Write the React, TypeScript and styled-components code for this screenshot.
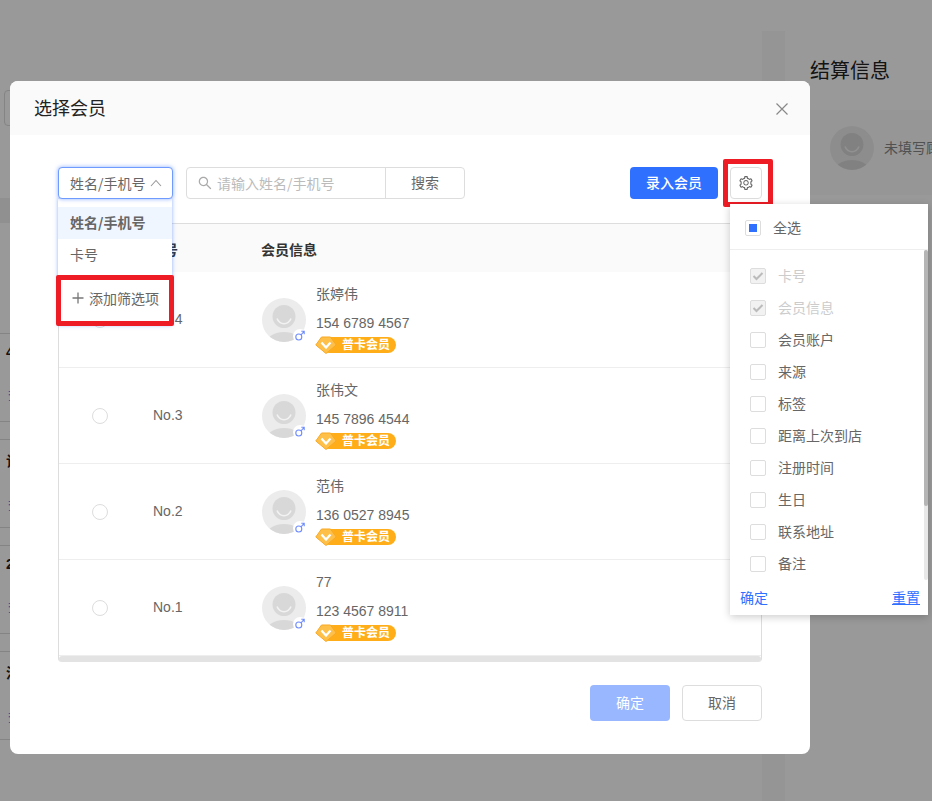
import React from "react";
import styled, { createGlobalStyle } from "styled-components";
import { AiOutlineSetting, AiOutlineSearch } from "react-icons/ai";

const FONT = `"Liberation Sans", "Noto Sans CJK SC", sans-serif`;
const CJK = `"Noto Sans CJK SC", sans-serif`;
const BLUE = "#3070ff";

const Global = createGlobalStyle`
  html, body { margin: 0; padding: 0; background: #fff; }
  body { font-family: ${FONT}; font-size: 14px; color: #666; overflow: hidden; }
  * { box-sizing: border-box; }
`;

const Page = styled.div`
  position: relative;
  width: 932px;
  height: 801px;
  overflow: hidden;
  background: #fff;
`;
const TopBand = styled.div`
  height: 31px;
  background: #fff;
`;
const Workspace = styled.div`
  display: flex;
  height: 770px;
  background: #f8f8f8;
`;
const LeftArea = styled.div`
  width: 762px;
  background: #fff;
  padding-top: 59px;
`;
const BgFilter = styled.div`
  width: 120px;
  height: 36px;
  margin-left: 4px;
  border: 1px solid #ddd;
  border-radius: 4px;
`;
const BgTableHead = styled.div`
  height: 25px;
  margin-top: 72px;
  background: #f0f0f0;
`;
const BgRows = styled.div`
  margin-top: 110px;
  display: flex;
  flex-direction: column;
  gap: 17px;
`;
const BgRow = styled.div`
  height: 89px;
  padding: 10px 0 0 6px;
  border-top: 1px solid #ddd;
  border-bottom: 1px solid #ddd;
`;
const BgRowTitle = styled.div`
  font-size: 14px;
  font-weight: 700;
  color: #222;
`;
const BgRowLink = styled.div`
  margin-top: 26px;
  padding-left: 2px;
  font-size: 12px;
  color: ${BLUE};
`;
const RightPanel = styled.aside`
  width: 147px;
  margin-left: 23px;
  background: #fff;
`;
const SettleTitle = styled.h2`
  margin: 0;
  padding: 27px 0 0 25px;
  height: 79px;
  font-size: 20px;
  line-height: 26px;
  font-weight: 400;
  color: #222;
`;
const CustomerCard = styled.div`
  display: flex;
  align-items: center;
  gap: 9px;
  height: 85px;
  padding: 0 0 9px 45px;
  background: #fbfbfb;
  white-space: nowrap;
  overflow: hidden;
  font-size: 14px;
  color: #888;
`;
const CustomerName = styled.span`
  margin: -2px 0 0 1px;
`;
const Overlay = styled.div`
  position: absolute;
  inset: 0;
  background: rgba(0, 0, 0, 0.4);
`;

const Modal = styled.div`
  position: absolute;
  left: 10px;
  top: 81px;
  width: 800px;
  height: 673px;
  background: #fff;
  border-radius: 8px;
  display: flex;
  flex-direction: column;
`;
const ModalHeader = styled.header`
  display: flex;
  align-items: center;
  justify-content: space-between;
  height: 54px;
  padding: 0 22px 0 24px;
  background: #fafafa;
  border-radius: 8px 8px 0 0;
`;
const ModalTitle = styled.h1`
  margin: 0 0 2px;
  font-size: 18px;
  font-weight: 400;
  color: #222;
`;
const CloseIcon = styled.svg`
  width: 12px;
  height: 12px;
  display: block;
  margin-top: 2px;
`;
const ModalBody = styled.div`
  padding: 32px 48px 0;
`;
const Toolbar = styled.div`
  display: flex;
  align-items: center;
  height: 32px;
`;
const SelectWrap = styled.div`
  position: relative;
  width: 115px;
  height: 32px;
`;
const SelectBox = styled.div`
  display: flex;
  align-items: center;
  justify-content: space-between;
  height: 32px;
  padding: 0 10px 0 11px;
  border: 1px solid #6f9bff;
  border-radius: 4px;
  background: #fff;
  box-shadow: 0 0 4px rgba(48, 112, 255, 0.55);
  color: #666;
  font-family: ${CJK};
  white-space: nowrap;
  position: relative;
  z-index: 2;
`;
const Chevron = styled.svg`
  width: 12px;
  height: 8px;
  display: block;
`;
const Dropdown = styled.div`
  position: absolute;
  left: 0;
  top: 32px;
  width: 114px;
  padding: 8px 0 12px;
  background: #fff;
  box-shadow: 0 0 4px rgba(48, 112, 255, 0.55);
  z-index: 1;
`;
const DropItem = styled.div<{ $active?: boolean }>`
  height: 32px;
  line-height: 30px;
  padding-left: 12px;
  font-family: ${CJK};
  font-weight: ${(p) => (p.$active ? 700 : 400)};
  background: ${(p) => (p.$active ? "#f0f6ff" : "#fff")};
  color: #666;
`;
const DropAdd = styled.div`
  display: flex;
  align-items: center;
  gap: 5px;
  height: 30px;
  margin-top: 12px;
  padding-left: 14px;
  white-space: nowrap;
  color: #666;
`;
const PlusIcon = styled.svg`
  width: 12px;
  height: 12px;
  display: block;
  flex: none;
`;
const DropMark = styled.div`
  position: absolute;
  left: -2px;
  top: 76px;
  width: 118px;
  height: 51px;
  border: 5px solid #ee1c25;
  border-radius: 2px;
  pointer-events: none;
`;
const SearchGroup = styled.div`
  display: flex;
  margin-left: 13px;
  height: 32px;
  width: 279px;
  border: 1px solid #ddd;
  border-radius: 4px;
`;
const SearchField = styled.div`
  display: flex;
  align-items: center;
  gap: 4px;
  width: 199px;
  padding-left: 10px;
  color: #bbb;
  font-family: ${CJK};
  font-size: 14px;
  border-right: 1px solid #ddd;
  white-space: nowrap;
`;
const SearchButton = styled.div`
  flex: 1;
  text-align: center;
  line-height: 30px;
  color: #666;
`;
const Spacer = styled.div`
  flex: 1;
`;
const PrimaryButton = styled.div`
  width: 88px;
  height: 32px;
  line-height: 32px;
  text-align: center;
  background: ${BLUE};
  border-radius: 4px;
  color: #fff;
  font-weight: 500;
`;
const GearButton = styled.div`
  position: relative;
  display: flex;
  align-items: center;
  justify-content: center;
  width: 32px;
  height: 32px;
  margin-left: 12px;
  border: 1px solid #ddd;
  border-radius: 4px;
  background: #fff;
  color: #666;
  font-size: 16px;
`;
const GearMark = styled.div`
  position: absolute;
  left: -8px;
  top: -9px;
  width: 50px;
  height: 48px;
  border: 5px solid #ee1c25;
  border-radius: 2px;
  pointer-events: none;
`;

const Table = styled.div`
  margin-top: 24px;
  border: 1px solid #ddd;
  border-bottom: 0;
  border-radius: 0 0 4px 4px;
`;
const HeadRow = styled.div`
  display: grid;
  grid-template-columns: 82px 120px 1fr;
  align-items: center;
  height: 48px;
  padding-top: 2px;
  background: #fafafa;
  font-weight: 700;
  color: #333;
`;
const HeadNo = styled.div`
  padding-left: 9px;
`;
const Row = styled.div`
  display: grid;
  grid-template-columns: 82px 120px 1fr;
  align-items: center;
  height: 96px;
  border-bottom: 1px solid #eee;
`;
const RadioCell = styled.div`
  display: flex;
  justify-content: center;
`;
const Radio = styled.span`
  width: 16px;
  height: 16px;
  border: 1px solid #ddd;
  border-radius: 50%;
  background: #fff;
`;
const NoCell = styled.div`
  padding: 0 0 2px 12px;
  color: #666;
`;
const MemberCell = styled.div`
  display: flex;
  align-items: center;
  gap: 10px;
  padding-left: 1px;
`;
const AvatarWrap = styled.div`
  position: relative;
  width: 44px;
  height: 44px;
  flex: none;
`;
const AvatarSvg = styled.svg`
  display: block;
`;
const GenderBadge = styled.span`
  position: absolute;
  right: -1px;
  bottom: -1px;
  display: flex;
  align-items: center;
  justify-content: center;
  width: 14px;
  height: 14px;
  border-radius: 50%;
  background: #fff;
`;
const Info = styled.div`
  display: flex;
  flex-direction: column;
  align-items: flex-start;
  padding-bottom: 3px;
`;
const Name = styled.div`
  height: 20px;
  line-height: 20px;
  color: #666;
`;
const Phone = styled.div`
  height: 20px;
  line-height: 20px;
  margin-top: 9px;
  color: #666;
`;
const Level = styled.div`
  position: relative;
  margin-top: 4px;
  margin-left: -1px;
  height: 16px;
  width: 81px;
  padding-left: 6px;
`;
const LevelPill = styled.div`
  height: 16px;
  line-height: 16px;
  padding-left: 21px;
  border-radius: 8px;
  background: #ffae1a;
  color: #fff;
  font-size: 12px;
  font-weight: 700;
  white-space: nowrap;
`;
const LevelGem = styled.svg`
  position: absolute;
  left: 0;
  top: -1px;
`;
const HScroll = styled.div`
  height: 6px;
  background: #e3e3e3;
  border-radius: 3px;
`;
const Footer = styled.div`
  display: flex;
  justify-content: flex-end;
  gap: 12px;
  margin-top: 23px;
`;
const ConfirmButton = styled.div`
  width: 80px;
  height: 36px;
  line-height: 36px;
  text-align: center;
  background: #99b7ff;
  border-radius: 4px;
  color: #fff;
`;
const CancelButton = styled.div`
  width: 80px;
  height: 36px;
  line-height: 34px;
  text-align: center;
  background: #fff;
  border: 1px solid #ddd;
  border-radius: 4px;
  color: #666;
`;

const ColumnPopover = styled.div`
  position: absolute;
  left: 720px;
  top: 123px;
  width: 198px;
  height: 411px;
  background: #fff;
  box-shadow: 0 2px 8px rgba(0, 0, 0, 0.2);
  display: flex;
  flex-direction: column;
`;
const AllRow = styled.div`
  display: flex;
  align-items: center;
  gap: 12px;
  height: 46px;
  padding: 2px 0 0 15px;
  border-bottom: 1px solid #eee;
  color: #666;
`;
const ItemLabel = styled.span`
  margin-top: -2px;
`;
const CheckBox = styled.span<{ $disabled?: boolean }>`
  display: flex;
  align-items: center;
  justify-content: center;
  flex: none;
  width: 16px;
  height: 16px;
  border: 1px solid #ddd;
  border-radius: 2px;
  background: ${(p) => (p.$disabled ? "#f2f2f2" : "#fff")};
`;
const CheckInner = styled.span`
  width: 8px;
  height: 8px;
  background: ${BLUE};
`;
const ListArea = styled.div`
  display: flex;
  height: 330px;
`;
const List = styled.div`
  flex: 1;
  padding: 10px 0 0 20px;
`;
const ListItem = styled.div<{ $disabled?: boolean }>`
  display: flex;
  align-items: center;
  gap: 12px;
  height: 32px;
  color: ${(p) => (p.$disabled ? "#ccc" : "#666")};
  white-space: nowrap;
`;
const ScrollTrack = styled.div`
  width: 4px;
  height: 330px;
  background: #e8e8e8;
  border-radius: 2px;
`;
const ScrollThumb = styled.div`
  height: 256px;
  background: #b5b5b5;
  border-radius: 2px;
`;
const PopFooter = styled.div`
  display: flex;
  align-items: center;
  justify-content: space-between;
  flex: 1;
  padding: 0 8px 1px 10px;
  color: ${BLUE};
`;
const ResetLink = styled.span`
  text-decoration: underline;
`;

const members = [
  { no: "No.4", name: "张婷伟", phone: "154 6789 4567" },
  { no: "No.3", name: "张伟文", phone: "145 7896 4544" },
  { no: "No.2", name: "范伟", phone: "136 0527 8945" },
  { no: "No.1", name: "77", phone: "123 4567 8911" },
];
const columns = ["卡号", "会员信息", "会员账户", "来源", "标签", "距离上次到店", "注册时间", "生日", "联系地址", "备注"];
const bgRows = ["4", "让", "2", "洛"];

function Avatar({ clip }: { clip: string }) {
  return (
    <AvatarSvg width={44} height={44} viewBox="0 0 44 44">
      <defs>
        <clipPath id={clip}>
          <circle cx="22" cy="22" r="22" />
        </clipPath>
      </defs>
      <circle cx="22" cy="22" r="22" fill="#ececec" />
      <g clipPath={`url(#${clip})`}>
        <circle cx="22" cy="18.5" r="11.5" fill="#d8d8d8" />
        <path d="M15 20.5c1.5 3.6 4 5.2 7 5.2s5.500-1.600 7-5.200" fill="none" stroke="#f2f2f2" strokeWidth="1.600" />
        <ellipse cx="22" cy="44" rx="17" ry="10" fill="#d8d8d8" />
      </g>
    </AvatarSvg>
  );
}

function MaleIcon() {
  return (
    <svg width="10" height="11" viewBox="0 0 10 11" fill="none" stroke="#6f8cff" strokeWidth="1.100">
      <circle cx="3.800" cy="7" r="3" />
      <path d="M6 4.800 9 1.500M6.300 1.300h2.900v2.900" />
    </svg>
  );
}

function Gem() {
  return (
    <LevelGem width="22" height="18" viewBox="0 0 22 18">
      <path d="M0.800 9 6.500 1h9l5.700 8-10.200 8.500z" fill="#ffc04a" stroke="#f7a823" strokeWidth="1" strokeLinejoin="round" />
      <path d="M6.500 6.500 11 11.500l4.500-5" fill="none" stroke="#fff" strokeWidth="2.200" />
    </LevelGem>
  );
}

function DisabledCheck() {
  return (
    <svg width="12" height="10" viewBox="0 0 12 10" fill="none" stroke="#bbb" strokeWidth="2">
      <path d="M1.500 5 4.500 8 10.500 2" />
    </svg>
  );
}

export default function App() {
  return (
    <Page>
      <Global />
      <TopBand />
      <Workspace>
        <LeftArea>
          <BgFilter />
          <BgTableHead />
          <BgRows>
            {bgRows.map((t) => (
              <BgRow key={t}>
                <BgRowTitle>{t}</BgRowTitle>
                <BgRowLink>查</BgRowLink>
              </BgRow>
            ))}
          </BgRows>
        </LeftArea>
        <RightPanel>
          <SettleTitle>结算信息</SettleTitle>
          <CustomerCard>
            <AvatarWrap>
              <Avatar clip="avatar-customer" />
            </AvatarWrap>
            <CustomerName>未填写顾客</CustomerName>
          </CustomerCard>
        </RightPanel>
      </Workspace>
      <Overlay />
      <Modal>
        <ModalHeader>
          <ModalTitle>选择会员</ModalTitle>
          <CloseIcon viewBox="0 0 12 12" fill="none" stroke="#888" strokeWidth="1.200">
            <path d="M.5.500l11 11M11.500.500l-11 11" />
          </CloseIcon>
        </ModalHeader>
        <ModalBody>
          <Toolbar>
            <SelectWrap>
              <SelectBox>
                姓名/手机号
                <Chevron viewBox="0 0 12 8" fill="none" stroke="#999" strokeWidth="1.100">
                  <path d="M1 7 6 1.500 11 7" />
                </Chevron>
              </SelectBox>
              <Dropdown>
                <DropItem $active>姓名/手机号</DropItem>
                <DropItem>卡号</DropItem>
                <DropAdd>
                  <PlusIcon viewBox="0 0 12 12" fill="none" stroke="#777" strokeWidth="1.300">
                    <path d="M6 .5v11M.5 6h11" />
                  </PlusIcon>
                  添加筛选项
                </DropAdd>
                <DropMark />
              </Dropdown>
            </SelectWrap>
            <SearchGroup>
              <SearchField>
                <AiOutlineSearch size={16} color="#aaa" />
                请输入姓名/手机号
              </SearchField>
              <SearchButton>搜索</SearchButton>
            </SearchGroup>
            <Spacer />
            <PrimaryButton>录入会员</PrimaryButton>
            <GearButton>
              <AiOutlineSetting />
              <GearMark />
            </GearButton>
          </Toolbar>
          <Table>
            <HeadRow>
              <div />
              <HeadNo>序号</HeadNo>
              <div>会员信息</div>
            </HeadRow>
            {members.map((m) => (
              <Row key={m.no}>
                <RadioCell>
                  <Radio />
                </RadioCell>
                <NoCell>{m.no}</NoCell>
                <MemberCell>
                  <AvatarWrap>
                    <Avatar clip={`avatar-${m.no}`} />
                    <GenderBadge>
                      <MaleIcon />
                    </GenderBadge>
                  </AvatarWrap>
                  <Info>
                    <Name>{m.name}</Name>
                    <Phone>{m.phone}</Phone>
                    <Level>
                      <LevelPill>普卡会员</LevelPill>
                      <Gem />
                    </Level>
                  </Info>
                </MemberCell>
              </Row>
            ))}
            <HScroll />
          </Table>
          <Footer>
            <ConfirmButton>确定</ConfirmButton>
            <CancelButton>取消</CancelButton>
          </Footer>
        </ModalBody>
        <ColumnPopover>
          <AllRow>
            <CheckBox>
              <CheckInner />
            </CheckBox>
            <ItemLabel>全选</ItemLabel>
          </AllRow>
          <ListArea>
            <List>
              {columns.map((c, i) => (
                <ListItem key={c} $disabled={i < 2}>
                  <CheckBox $disabled={i < 2}>{i < 2 && <DisabledCheck />}</CheckBox>
                  <ItemLabel>{c}</ItemLabel>
                </ListItem>
              ))}
            </List>
            <ScrollTrack>
              <ScrollThumb />
            </ScrollTrack>
          </ListArea>
          <PopFooter>
            <span>确定</span>
            <ResetLink>重置</ResetLink>
          </PopFooter>
        </ColumnPopover>
      </Modal>
    </Page>
  );
}
